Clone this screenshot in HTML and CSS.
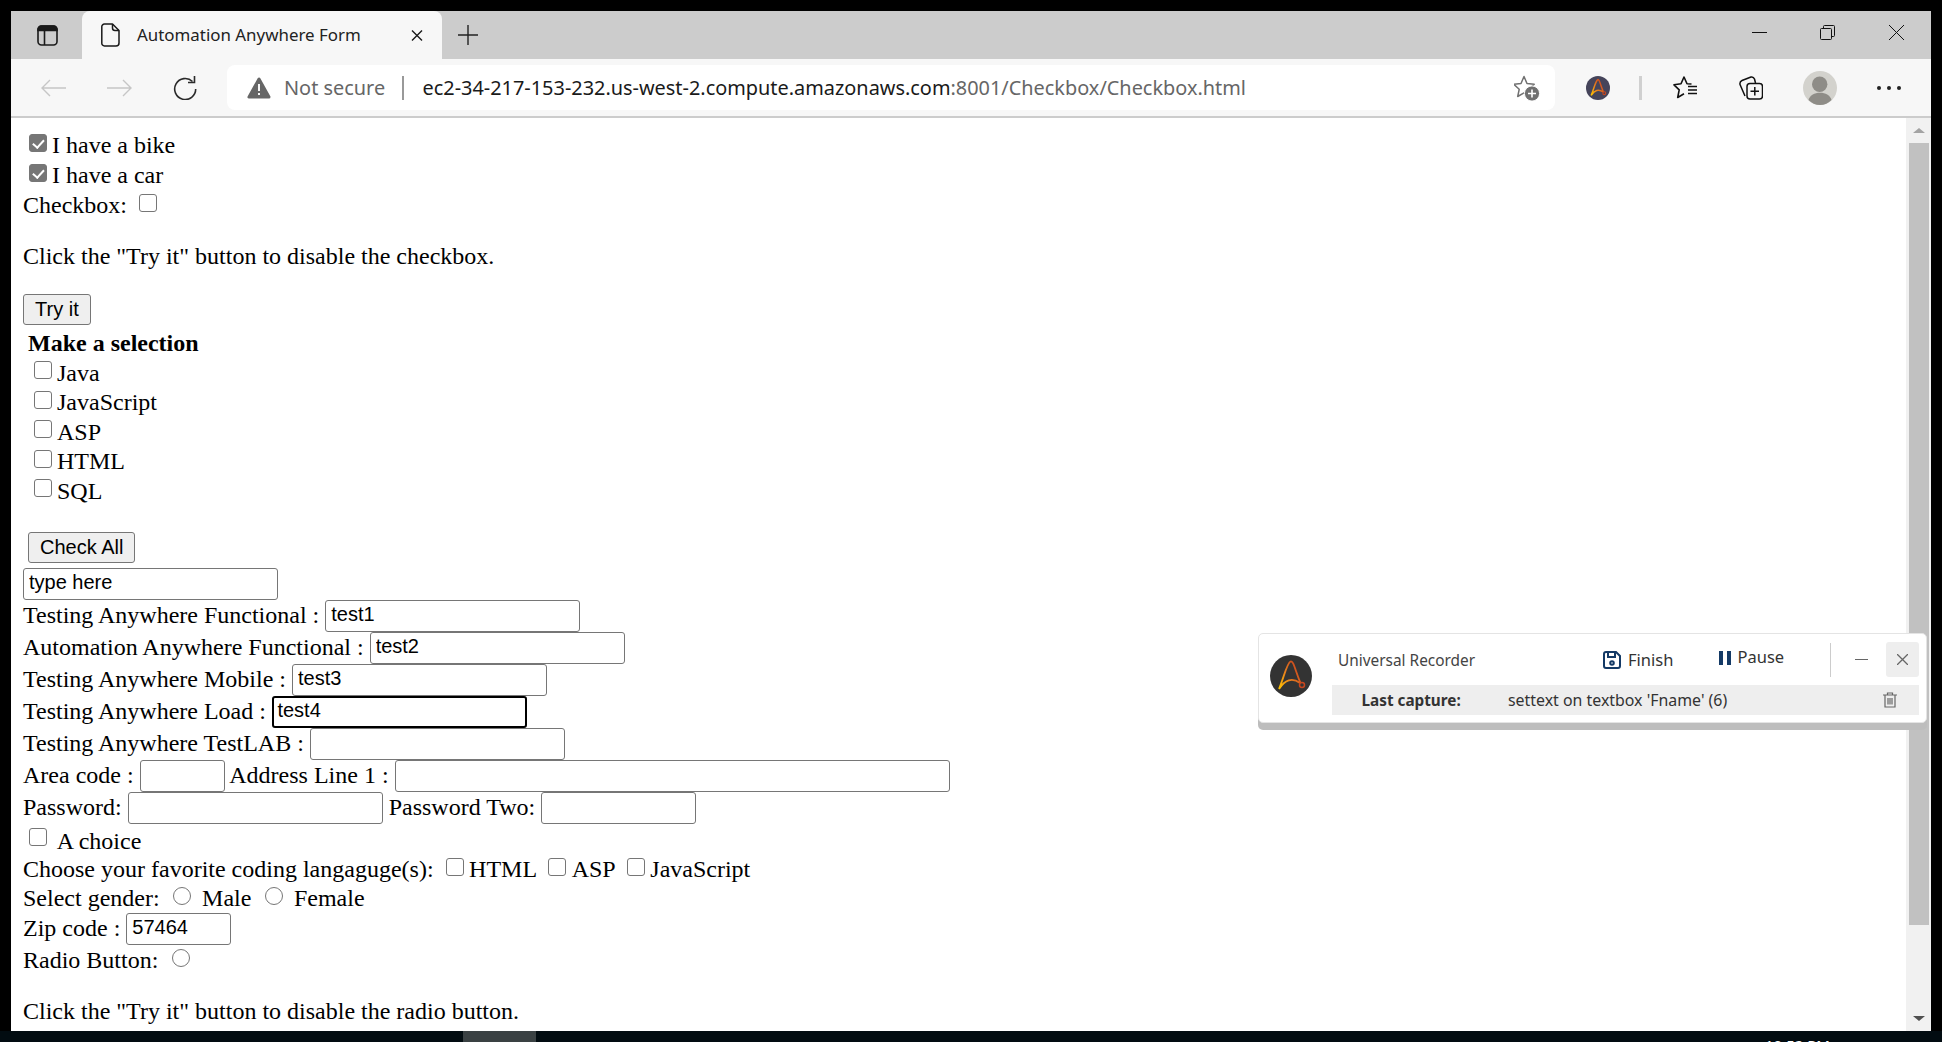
FILE: index.html
```html
<!DOCTYPE html>
<html lang="en">
<head>
    <meta charset="UTF-8">
    <title>Automation Anywhere Form</title>
    <link rel="stylesheet" href="styles.css">
</head>
<body>

<div class="window">
    <div class="tabbar">
        <svg class="ico-sidebar" width="21" height="21" viewBox="0 0 21 21" fill="none" stroke="#1a1a1a" stroke-width="1.6">
            <rect x="1" y="1" width="19" height="19" rx="3.5"/>
            <path d="M1 5.5V4.5a3.5 3.5 0 0 1 3.5-3.5h12a3.5 3.5 0 0 1 3.5 3.5v1z" fill="#1a1a1a"/>
            <path d="M7.5 5.5V20"/>
        </svg>
        <div class="tab">
            <svg class="ico-doc" width="19" height="24" viewBox="0 0 19 24" fill="none" stroke="#1a1a1a" stroke-width="1.5" stroke-linejoin="round">
                <path d="M3.5 1H11.5L18 7.5V20a3 3 0 0 1-3 3H3.5a2.7 2.7 0 0 1-2.7-3V4a2.7 2.7 0 0 1 2.7-3z"/>
                <path d="M11.5 1V5a2.5 2.5 0 0 0 2.5 2.5h4"/>
            </svg>
            <span class="tab-title">Automation Anywhere Form</span>
            <svg class="ico-tabclose" width="12" height="11" viewBox="0 0 12 11" stroke="#1a1a1a" stroke-width="1.4"><path d="M1 .5l10 10M11 .5L1 10.5"/></svg>
        </div>
        <svg class="ico-new" width="22" height="22" viewBox="0 0 22 22" stroke="#222" stroke-width="1.4"><path d="M11 1v20M1 11h20"/></svg>
        <div class="winctl">
            <svg width="15" height="15" viewBox="0 0 15 15" stroke="#111"><path d="M0 7.5h15"/></svg>
            <svg width="15" height="15" viewBox="0 0 15 15" fill="none" stroke="#111"><rect x=".5" y="3.5" width="11" height="11" rx="1"/><path d="M3.5 3.5V1.5a1 1 0 0 1 1-1h9a1 1 0 0 1 1 1v9a1 1 0 0 1-1 1h-2"/></svg>
            <svg class="ctl-close" width="15" height="15" viewBox="0 0 15 15" stroke="#111"><path d="M0 0l15 15M15 0L0 15"/></svg>
        </div>
    </div>

    <div class="toolbar">
        <svg class="ico-back" width="25" height="18" viewBox="0 0 25 18" fill="none" stroke="#c6c6c6" stroke-width="1.4"><path d="M25 9H1M9 1L1 9l8 8"/></svg>
        <svg class="ico-fwd" width="25" height="18" viewBox="0 0 25 18" fill="none" stroke="#c6c6c6" stroke-width="1.4"><path d="M0 9h24M16 1l8 8-8 8"/></svg>
        <svg class="ico-reload" width="24" height="24" viewBox="0 0 24 24" fill="none" stroke="#2a2a2a" stroke-width="1.6"><path d="M19.5 5.5A10.5 10.5 0 1 0 22.7 13"/><path d="M21.5 0v6.5H15"/></svg>
        <div class="omnibox">
            <svg class="ico-warn" width="24" height="22" viewBox="0 0 24 22"><path d="M12 2L2 20h20z" fill="#666" stroke="#666" stroke-width="3" stroke-linejoin="round"/><path d="M11 7h2v7h-2zM11 16h2v2h-2z" fill="#f7f7f7"/></svg>
            <span class="not-secure">Not secure</span>
            <span class="omni-sep"></span>
            <span class="url">ec2-34-217-153-232.us-west-2.compute.amazonaws.com<span class="url-path">:8001/Checkbox/Checkbox.html</span></span>
            <svg class="ico-favadd" width="26" height="26" viewBox="0 0 26 26">
                <path d="M10 1.5l3 7 7.2.8-5.4 5 1.5 7.2-6.3-3.6-6.3 3.6 1.5-7.2-5.4-5L7 8.5z" fill="none" stroke="#707070" stroke-width="1.5" stroke-linejoin="round"/>
                <circle cx="18" cy="18.5" r="7.6" fill="#707070" stroke="#fff" stroke-width="1"/>
                <path d="M18 14.5v8M14 18.5h8" stroke="#fff" stroke-width="1.6"/>
            </svg>
        </div>
        <svg class="ico-ext" width="24" height="24" viewBox="0 0 42 42">
            <circle cx="21" cy="21" r="21" fill="#45445a"/>
            <path d="M9 34C14 22 17 8 20.500 6.500C23.500 5 25 15 30.500 28M9 34C15 25 22 22 30 28" fill="none" stroke="url(#amber)" stroke-width="2.600"/>
            <circle cx="32" cy="30" r="2.500" fill="none" stroke="#c8461e" stroke-width="2"/>
        </svg>
        <span class="tool-sep"></span>
        <svg class="ico-favs" width="24" height="23" viewBox="0 0 24 23" fill="none" stroke="#111" stroke-width="1.6" stroke-linejoin="round"><path d="M18.500 8L14 7.800 11 1 8 7.800 1 8.800l5.200 5-1.500 7.700 6.300-3.700"/><path d="M15 10.500h9M15 14h9M15 17.500h9"/></svg>
        <svg class="ico-coll" width="24" height="24" viewBox="0 0 24 24" fill="none" stroke="#111" stroke-width="1.5" stroke-linejoin="round"><rect x="8" y="7.500" width="15.500" height="15.500" rx="3"/><path d="M15.800 11v8.500M11.500 15.200h8.500"/><path d="M6 20L1 8.500Q.5 5.500 3 4.500L12 1Q14.500 .5 15.500 3L16.500 7"/></svg>
        <svg class="ico-avatar" width="34" height="34" viewBox="0 0 34 34"><circle cx="17" cy="17" r="17" fill="#d3d2cd"/><circle cx="16.700" cy="13.300" r="7.700" fill="#8e8c87"/><path d="M5.500 29C7 24 11.500 21.700 17 21.700S27 24 28.500 29C25.500 32 21.500 34 17 34S8.500 32 5.500 29z" fill="#8e8c87"/></svg>
        <div class="dots"><span></span><span></span><span></span></div>
    </div>

    <div class="viewport">
        <div class="page">
            <div class="line"><label><input type="checkbox" class="ck" checked>I have a bike</label></div>
            <div class="line"><label><input type="checkbox" class="ck" checked>I have a car</label></div>
            <div class="line">Checkbox: <input type="checkbox" class="ck gap-left"></div>
            <div class="line click-note">Click the "Try it" button to disable the checkbox.</div>
            <button class="btn try-btn">Try it</button>
            <div class="line sel-title"><b>Make a selection</b></div>
            <div class="opt"><label><input type="checkbox" class="ck">Java</label></div>
            <div class="opt"><label><input type="checkbox" class="ck">JavaScript</label></div>
            <div class="opt"><label><input type="checkbox" class="ck">ASP</label></div>
            <div class="opt"><label><input type="checkbox" class="ck">HTML</label></div>
            <div class="opt"><label><input type="checkbox" class="ck">SQL</label></div>
            <button class="btn check-btn">Check All</button>
            <input type="text" class="tx w255 type-here" value="type here">
            <div class="fld">Testing Anywhere Functional : <input type="text" class="tx w255" value="test1"></div>
            <div class="fld">Automation Anywhere Functional : <input type="text" class="tx w255" value="test2"></div>
            <div class="fld">Testing Anywhere Mobile : <input type="text" class="tx w255" value="test3"></div>
            <div class="fld">Testing Anywhere Load : <input type="text" class="tx w255 focused" value="test4"></div>
            <div class="fld">Testing Anywhere TestLAB : <input type="text" class="tx w255"></div>
            <div class="fld">Area code : <input type="text" class="tx w85"> Address Line 1 : <input type="text" class="tx w555"></div>
            <div class="fld">Password: <input type="password" class="tx w255"> Password Two: <input type="password" class="tx w155"></div>
            <div class="tight choice"><label><input type="checkbox" class="ck"> A choice</label></div>
            <div class="tight">Choose your favorite coding langaguge(s): <input type="checkbox" class="ck gap-left">HTML <input type="checkbox" class="ck gap-left">ASP <input type="checkbox" class="ck gap-left">JavaScript</div>
            <div class="tight">Select gender: <input type="radio" class="rd"> Male <input type="radio" class="rd"> Female</div>
            <div class="fld zip">Zip code : <input type="text" class="tx w105" value="57464"></div>
            <div class="line radio-row">Radio Button: <input type="radio" class="rd"></div>
            <div class="line radio-note">Click the "Try it" button to disable the radio button.</div>
        </div>

        <div class="scrollbar">
            <div class="sb-btn"><span class="arrow-up"></span></div>
            <div class="sb-thumb"></div>
            <div class="sb-btn sb-end"><span class="arrow-down"></span></div>
        </div>

        <div class="recorder">
            <svg class="rec-logo" width="42" height="42" viewBox="0 0 42 42">
                <defs>
                    <linearGradient id="amber" gradientUnits="userSpaceOnUse" x1="9" y1="34" x2="33" y2="20">
                        <stop offset="0" stop-color="#ffc400"/>
                        <stop offset=".5" stop-color="#e8801e"/>
                        <stop offset="1" stop-color="#c8461e"/>
                    </linearGradient>
                </defs>
                <circle cx="21" cy="21" r="21" fill="#333"/>
                <path d="M9 34C14 22 17 8 20.500 6.500C23.500 5 25 15 30.500 28M9 34C15 25 22 22 30 28" fill="none" stroke="url(#amber)" stroke-width="1.800"/>
                <circle cx="32" cy="30" r="2.500" fill="none" stroke="#c8461e" stroke-width="1.500"/>
            </svg>
            <div class="rec-main">
                <div class="rec-head">
                    <span class="rec-title">Universal Recorder</span>
                    <svg class="ico-save" width="18" height="18" viewBox="0 0 18 18" fill="none" stroke="#143a66" stroke-width="2"><path d="M3 1h10l4 4v10a2 2 0 0 1-2 2H3a2 2 0 0 1-2-2V3a2 2 0 0 1 2-2z"/><path d="M5 1v5h7V1"/><circle cx="9" cy="12" r="1.800"/></svg>
                    <span class="rec-finish">Finish</span>
                    <span class="bars"><span></span><span></span></span>
                    <span class="rec-pause">Pause</span>
                    <span class="rec-sep"></span>
                    <span class="rec-min"></span>
                    <span class="rec-close"><svg width="11" height="11" viewBox="0 0 11 11" stroke="#666" stroke-width="1.300"><path d="M0 0l11 11M11 0L0 11"/></svg></span>
                </div>
                <div class="rec-bar">
                    <b class="rec-last">Last capture:</b>
                    <span class="rec-msg">settext on textbox 'Fname' (6)</span>
                    <svg class="ico-trash" width="14" height="16" viewBox="0 0 14 16" fill="none" stroke="#666" stroke-width="1.200"><path d="M0 3h14M4.500 3V1h5v2M2 3v12h10V3M5 6v6.500M7 6v6.500M9 6v6.500"/></svg>
                </div>
            </div>
        </div>
    </div>
</div>

<div class="taskbar">
    <span class="task-active"></span>
    <span class="clock">10:52 PM</span>
</div>

</body>
</html>
```
FILE: styles.css
```css
html, body {
    margin: 0;
    height: 100%;
}
body {
    background-color: #000;
    display: flex;
    flex-direction: column;
    overflow: hidden;
    padding-top: 11px;
    box-sizing: border-box;
}
svg {
    display: block;
    flex: none;
}

/* browser chrome */
.window {
    margin: 0 11px;
    height: 1020px;
    display: flex;
    flex-direction: column;
    font-family: "Noto Sans", sans-serif;
}
.tabbar {
    height: 48px;
    background-color: #ccc;
    display: flex;
    align-items: center;
}
.ico-sidebar {
    margin-left: 26px;
}
.tab {
    margin-left: 24px;
    width: 360px;
    height: 48px;
    background-color: #f7f7f7;
    border-radius: 8px 8px 0 0;
    display: flex;
    align-items: center;
}
.ico-doc {
    margin-left: 19px;
}
.tab-title {
    margin-left: 17px;
    padding-bottom: 2px;
    font-size: 16.900px;
    color: #222;
    white-space: nowrap;
}
.ico-tabclose {
    margin-left: auto;
    margin-right: 19px;
}
.ico-new {
    margin-left: 15px;
}
.winctl {
    margin-left: auto;
    margin-right: 27px;
    display: flex;
    gap: 53px;
    padding-bottom: 5px;
}
.ctl-close {
    margin-left: 1px;
}
.toolbar {
    height: 59px;
    box-sizing: border-box;
    background-color: #f7f7f7;
    border-bottom: 2px solid #ccc;
    display: flex;
    align-items: center;
}
.ico-back {
    margin-left: 30px;
}
.ico-fwd {
    margin-left: 41px;
}
.ico-reload {
    margin-left: 41px;
}
.omnibox {
    margin-left: 30px;
    width: 1328px;
    height: 45px;
    background-color: #fff;
    border-radius: 8px;
    display: flex;
    align-items: center;
    white-space: nowrap;
}
.ico-warn {
    margin-left: 20px;
}
.not-secure {
    margin-left: 13px;
    width: 101px;
    font-size: 19.900px;
    color: #666;
}
.omni-sep {
    margin-left: 17px;
    width: 1.500px;
    height: 24px;
    background-color: #999;
}
.url {
    margin-left: 19px;
    font-size: 19.900px;
    color: #1a1a1a;
}
.url-path {
    color: #666;
}
.ico-favadd {
    position: absolute;
    left: 1514px;
}
.ico-ext {
    margin-left: 31px;
}
.tool-sep {
    margin-left: 29px;
    width: 3px;
    height: 24px;
    background-color: #d0d0d0;
}
.ico-favs {
    margin-left: 31px;
}
.ico-coll {
    margin-left: 42px;
}
.ico-avatar {
    margin-left: 40px;
}
.dots {
    margin-left: 40px;
    display: flex;
    gap: 6px;
}
.dots span {
    width: 4px;
    height: 4px;
    border-radius: 50%;
    background-color: #222;
}

/* page */
.viewport {
    position: relative;
    flex: 1;
    display: flex;
    min-height: 0;
}
.page {
    flex: 1;
    background-color: #fff;
    padding: 12px 0 0 12px;
    font-family: "Liberation Serif", serif;
    font-size: 24px;
    color: #000;
    white-space: nowrap;
}
.line {
    height: 30px;
    line-height: 30px;
}
.opt {
    height: 29.500px;
    line-height: 29.500px;
    padding-left: 5px;
}
.fld {
    height: 32px;
    line-height: 30px;
}
.tight {
    height: 29.500px;
    line-height: 29.500px;
}
.click-note {
    margin-top: 21px;
}
.sel-title {
    height: 31px;
    margin-top: 2.500px;
    padding-left: 5px;
}
.choice {
    margin: 3px 0 -1.500px;
}
.choice .ck {
    margin-bottom: 2.500px;
}
.zip {
    margin-top: -1px;
}
.radio-row {
    margin-top: .5px;
}
.radio-note {
    margin-top: 20.500px;
}
.btn {
    display: block;
    height: 31px;
    padding: 0 11px;
    font-family: "Liberation Sans", sans-serif;
    font-size: 20px;
    color: #000;
    background-color: #efefef;
    border: 1px solid #767676;
    border-radius: 3px;
}
.try-btn {
    margin-top: 23px;
}
.check-btn {
    margin: 26px 0 0 5px;
}
.tx {
    box-sizing: border-box;
    height: 32px;
    margin: 0;
    padding: 0 0 2px 5px;
    vertical-align: top;
    font-family: "Liberation Sans", sans-serif;
    font-size: 20px;
    color: #000;
    background-color: #fff;
    border: 1px solid #767676;
    border-radius: 3px;
    outline: none;
}
.type-here {
    display: block;
    margin-top: 4.500px;
}
.focused {
    border: 2.500px solid #000;
    padding-left: 3.500px;
}
.w85 { width: 85px; }
.w105 { width: 105px; }
.w155 { width: 155px; }
.w255 { width: 255px; }
.w555 { width: 555px; }
.ck, .rd {
    appearance: none;
    box-sizing: border-box;
    width: 18px;
    height: 18px;
    background-color: #fff;
    border: 1.250px solid #767676;
    position: relative;
}
.ck {
    margin: 0 5px 1px 6px;
    border-radius: 3px;
}
.rd {
    margin: 0 5px 1.500px 7.500px;
    border-radius: 50%;
}
.opt .ck {
    margin-bottom: 1.500px;
}
.gap-left {
    margin-right: 5.500px;
}
.ck:checked {
    background-color: #767676;
}
.ck:checked::after {
    content: "";
    position: absolute;
    left: 5px;
    top: 1.500px;
    width: 4.500px;
    height: 9px;
    border: solid #fff;
    border-width: 0 2.500px 2.500px 0;
    transform: rotate(42deg);
}

/* scrollbar */
.scrollbar {
    width: 25px;
    background-color: #f1f1f1;
    display: flex;
    flex-direction: column;
    align-items: center;
}
.sb-btn {
    height: 25px;
    display: flex;
    align-items: center;
    justify-content: center;
}
.sb-end {
    margin-top: auto;
}
.arrow-up {
    border: 6px solid transparent;
    border-top: 0;
    border-bottom: 5px solid #a3a3a3;
}
.arrow-down {
    border: 6px solid transparent;
    border-bottom: 0;
    border-top: 5px solid #505050;
}
.sb-thumb {
    width: 20px;
    height: 782px;
    background-color: #c1c1c1;
}

/* recorder panel */
.recorder {
    position: absolute;
    left: 1247px;
    top: 515px;
    width: 669px;
    height: 90px;
    box-sizing: border-box;
    background-color: #fff;
    border: 1px solid #e4e4e4;
    border-radius: 5px;
    box-shadow: 0 7px 0 #bdbdbd;
    display: flex;
    color: #333;
}
.rec-logo {
    margin: 21px 0 0 11px;
}
.rec-main {
    margin-left: 20px;
    width: 587px;
    display: flex;
    flex-direction: column;
}
.rec-head {
    height: 51px;
    display: flex;
    align-items: center;
    font-size: 16.500px;
    white-space: nowrap;
}
.rec-title {
    margin-left: 6px;
    width: 137px;
    padding-top: 2px;
    font-size: 15.400px;
    color: #444;
}
.ico-save {
    margin-left: 128px;
}
.rec-finish {
    margin-left: 7px;
    width: 46px;
}
.bars {
    margin-left: 45px;
    display: flex;
    gap: 4px;
    margin-bottom: 3px;
}
.bars span {
    width: 4px;
    height: 14px;
    background-color: #143a66;
}
.rec-pause {
    margin-left: 7px;
    width: 45px;
    padding-bottom: 7px;
}
.rec-sep {
    margin-left: 47px;
    width: 1px;
    height: 34px;
    background-color: #ccc;
}
.rec-min {
    margin-left: 25px;
    width: 13px;
    height: 1.500px;
    background-color: #666;
}
.rec-close {
    margin-left: 18px;
    width: 33px;
    height: 35px;
    background-color: #eee;
    border-radius: 3px;
    display: flex;
    align-items: center;
    justify-content: center;
}
.rec-bar {
    height: 30px;
    background-color: #eee;
    display: flex;
    align-items: center;
    font-size: 15.900px;
    white-space: nowrap;
}
.rec-last {
    margin-left: 29.500px;
    width: 146.500px;
    font-size: 15.300px;
}
.rec-msg {
    width: 375px;
}

/* desktop strip under the window */
.taskbar {
    flex: 1;
    min-height: 0;
    overflow: hidden;
    background-color: #020c11;
    display: flex;
}
.task-active {
    margin-left: 463px;
    width: 73px;
    height: 11px;
    background-color: #3a4143;
}
.clock {
    margin-left: 1229px;
    padding-top: 4px;
    font: 15px/20px "Noto Sans", sans-serif;
    color: #fff;
}
```
